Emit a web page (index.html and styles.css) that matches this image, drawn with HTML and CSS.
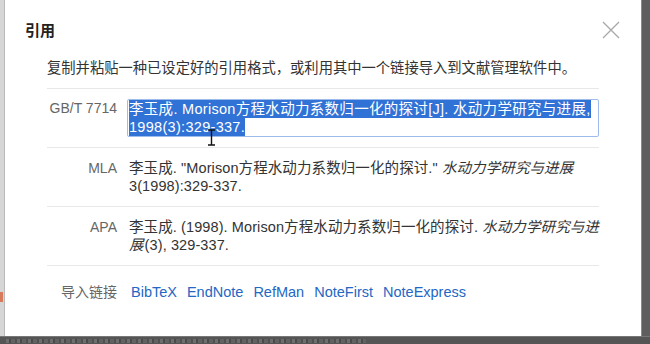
FILE: index.html
```html
<!DOCTYPE html>
<html lang="zh-CN">
<head>
    <meta charset="UTF-8">
    <meta name="viewport" content="width=device-width, initial-scale=1.0">
    <title>引用</title>
    <link rel="stylesheet" href="styles.css">
</head>
<body>
    <div class="screen">
        <div class="backdrop-left"><span class="mark"></span></div>
        <div class="dialog">
            <div class="dialog-header">
                <h3>引用</h3>
                <span class="close">
                    <svg width="18" height="18" viewBox="0 0 18 18"><path d="M1 1 L17 17 M17 1 L1 17" stroke="#a8a8a8" stroke-width="1.3" fill="none"/></svg>
                </span>
            </div>
            <div class="dialog-body">
                <p class="intro">复制并粘贴一种已设定好的引用格式，或利用其中一个链接导入到文献管理软件中。</p>
                <div class="cite-row first">
                    <div class="cite-label">GB/T 7714</div>
                    <div class="cite-box"><span class="sel">李玉成. Morison方程水动力系数归一化的探讨[J]. 水动力学研究与进展, 1998(3):329-337.</span></div>
                    <svg class="ibeam" width="9" height="17" viewBox="0 0 9 17"><path d="M1 1 H8 M4.5 1 V16 M1 16 H8" stroke="#111" stroke-width="1.4" fill="none"/></svg>
                </div>
                <div class="cite-row">
                    <div class="cite-label">MLA</div>
                    <div class="cite-text">李玉成. "Morison方程水动力系数归一化的探讨." <i>水动力学研究与进展</i> 3(1998):329-337.</div>
                </div>
                <div class="cite-row">
                    <div class="cite-label">APA</div>
                    <div class="cite-text">李玉成. (1998). Morison方程水动力系数归一化的探讨. <i>水动力学研究与进展</i>(3), 329-337.</div>
                </div>
                <div class="cite-row links">
                    <div class="cite-label">导入链接</div>
                    <div class="link-list">
                        <a href="#">BibTeX</a>
                        <a href="#">EndNote</a>
                        <a href="#">RefMan</a>
                        <a href="#">NoteFirst</a>
                        <a href="#">NoteExpress</a>
                    </div>
                </div>
            </div>
        </div>
        <div class="backdrop-right"></div>
    </div>
    <div class="backdrop-bottom"></div>
</body>
</html>
```

FILE: styles.css
```css
body {
    margin: 0;
    width: 650px;
    height: 344px;
    overflow: hidden;
    font-family: 'Liberation Sans', 'Noto Sans CJK SC', sans-serif;
    font-size: 14px;
    color: #333;
    background-color: #5c5c5c;
}
.screen {
    display: flex;
    height: 336px;
}
.backdrop-left {
    width: 4px;
    background-color: #d6d6d6;
    border-right: 1px solid #b9b9b9;
    position: relative;
}
.mark {
    position: absolute;
    left: 0;
    top: 292px;
    width: 3px;
    height: 10px;
    background-color: #d87a5c;
}
.backdrop-right {
    width: 8px;
    background-color: #5e5e5e;
    border-left: 1px solid #8a8a8a;
}
.backdrop-bottom {
    height: 7px;
    border-top: 1px solid #777;
    background-color: #555;
    background-image: repeating-linear-gradient(90deg, #6e6e6e 0 3px, #4a4a4a 3px 5px, #626262 5px 9px, #505050 9px 11px);
    background-size: 360px 4px;
    background-repeat: no-repeat;
    background-position: 6px 2px;
}
.dialog {
    width: 637px;
    background: white;
    display: flex;
    flex-direction: column;
}
.dialog-header {
    display: flex;
    justify-content: space-between;
    align-items: center;
    padding: 21px 21px 0 20px;
}
h3 {
    margin: 0;
    font-size: 15px;
    line-height: 20px;
    font-weight: bold;
    color: #222;
}
.close {
    display: flex;
    margin-top: -2px;
}
.dialog-body {
    padding: 0 42px;
}
.intro {
    margin: 17px 0 10px;
    font-size: 14.3px;
    line-height: 20px;
    color: #333;
}
.cite-row {
    display: grid;
    grid-template-columns: 70px 1fr;
    column-gap: 12px;
    border-top: 1px solid #e8e8e8;
    padding: 11px 0;
    line-height: 18px;
    position: relative;
}
.cite-row.first {
    padding: 10px 0;
}
.cite-label {
    text-align: right;
    color: #666;
}
.cite-text {
    font-size: 14.5px;
    letter-spacing: 0.1px;
}
.cite-box {
    font-size: 14.5px;
    letter-spacing: 0.3px;
    border: 1px solid #9dbcec;
    border-radius: 2px;
    margin-left: -2px;
    padding: 0 2px 0 1px;
    height: 36px;
}
.sel {
    background-color: #3172d6;
    color: white;
    padding: 1px 0;
}
.ibeam {
    position: absolute;
    left: 160px;
    top: 40px;
}
.cite-text i {
    font-style: italic;
    padding-right: 1px;
}
.links {
    padding-top: 17px;
}
.link-list {
    display: flex;
    gap: 10px;
    padding-left: 2px;
    font-size: 14.5px;
}
.link-list a {
    color: #2467c4;
    text-decoration: none;
}
```
